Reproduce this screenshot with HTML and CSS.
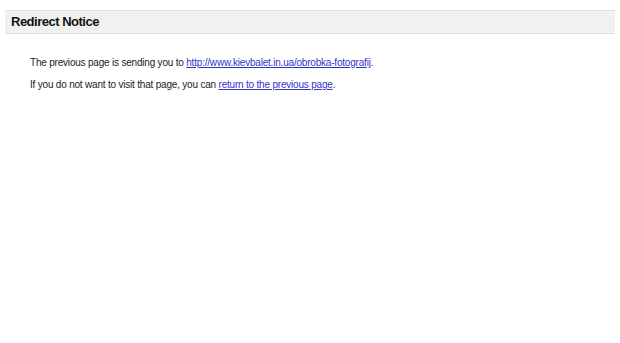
FILE: index.html
```html
<!DOCTYPE html>
<html>
<head>
<meta charset="utf-8">
<title>Redirect Notice</title>
<link rel="stylesheet" href="styles.css">
</head>
<body>
<div class="page">
  <div class="header">Redirect Notice</div>
  <div class="content">
    <p class="line">The previous page is sending you to <a href="#">http://www.kievbalet.in.ua/obrobka-fotografij</a>.</p>
    <p class="line">If you do not want to visit that page, you can <a href="#">return to the previous page</a>.</p>
  </div>
</div>
</body>
</html>
```

FILE: styles.css
```css
html, body {
  margin: 0;
  padding: 0;
  background: #fff;
}
body {
  font-family: "Liberation Sans", Arial, sans-serif;
  color: #222;
}
.page {
  padding: 10px 5px 0 5px;
}
.header {
  background: #f1f1f1;
  border-top: 1px solid #e0e0e0;
  border-bottom: 1px solid #e0e0e0;
  height: 22px;
  line-height: 22px;
  padding-left: 6px;
  font-weight: bold;
  font-size: 13px;
  letter-spacing: -0.5px;
  color: #111;
}
.content {
  padding: 23px 0 0 25px;
}
.line {
  margin: 0 0 10px 0;
  font-size: 10px;
  line-height: 12px;
  letter-spacing: -0.2px;
}
.line a {
  color: #3333cc;
  text-decoration: underline;
}
```
